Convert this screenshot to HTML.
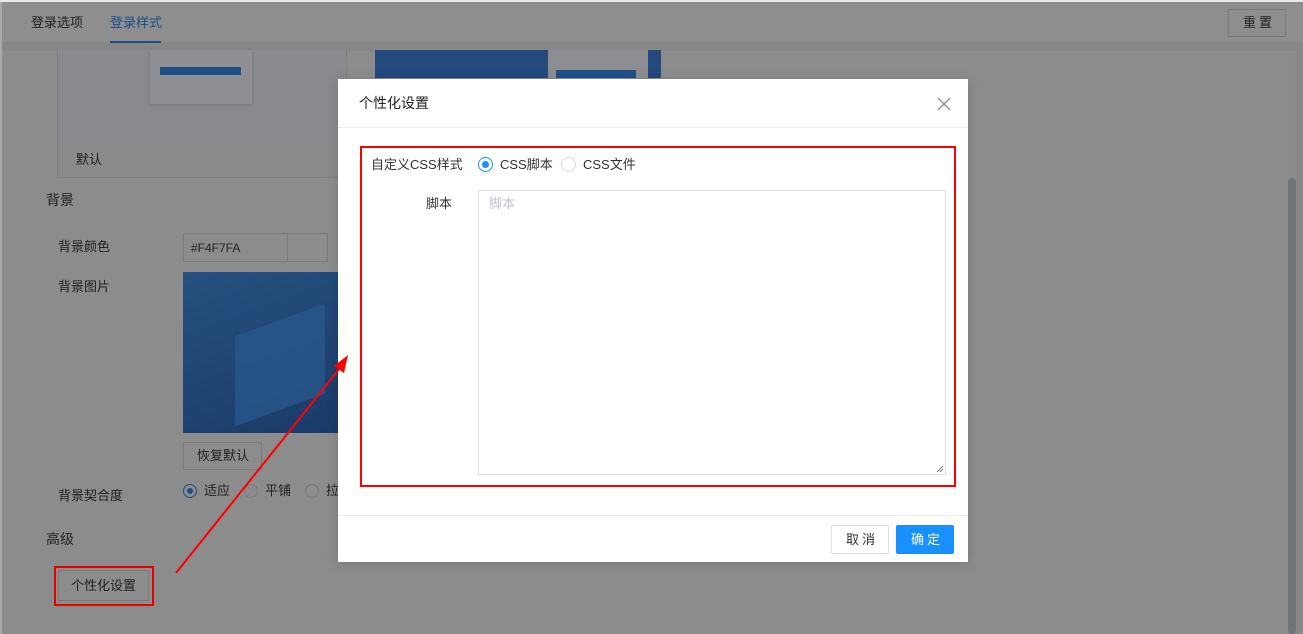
<!DOCTYPE html>
<html><head><meta charset="utf-8"><style>
*{margin:0;padding:0;box-sizing:border-box}
body{width:1303px;height:634px;overflow:hidden;background:#8b8b8b;font-family:"Liberation Sans","Noto Sans CJK SC",sans-serif;font-size:13px;line-height:16px;color:#222;position:relative}
.a{position:absolute}
.t{position:absolute;white-space:nowrap}
</style></head><body>
<div class="a" style="left:0;top:0;width:1303px;height:2px;background:#e8e8ea"></div>
<div class="a" style="left:0;top:2px;width:1303px;height:40px;background:#8e8e8e"></div>
<div class="a" style="left:0;top:42px;width:1303px;height:9px;background:#878787"></div>
<div class="a" style="left:0;top:2px;width:2px;height:632px;background:#a9a9ad"></div>
<div class="t" style="left:31px;top:15px;color:#232323">登录选项</div>
<div class="t" style="left:110px;top:15px;color:#1b4e86">登录样式</div>
<div class="a" style="left:110px;top:41px;width:51px;height:2px;background:#1b4e86"></div>
<div class="a" style="left:1228px;top:9px;width:58px;height:28px;border:1px solid #7a7a7a"></div>
<div class="t" style="left:1243px;top:15px;letter-spacing:3px">重置</div>
<div class="a" style="left:8px;top:51px;width:1281px;height:583px;background:#8c8c8c"></div>
<div class="a" style="left:1288px;top:178px;width:8px;height:456px;background:#707378;border-radius:4px"></div>
<div class="a" style="left:1296px;top:51px;width:7px;height:583px;background:#878787"></div>
<div class="a" style="left:57px;top:50px;width:290px;height:128px;border:1px solid #7f7f7f;border-top:none;background:#8a8a8c"></div>
<div class="a" style="left:58px;top:50px;width:288px;height:92px;background:#888a8e"></div>
<div class="a" style="left:150px;top:50px;width:102px;height:54px;background:#8e8f92;box-shadow:0 1px 4px rgba(0,0,0,.15)"></div>
<div class="a" style="left:160px;top:67px;width:81px;height:8px;background:#1f4f87"></div>
<div class="t" style="left:76px;top:152px;color:#1e1e1e">默认</div>
<div class="a" style="left:375px;top:50px;width:286px;height:28px;background:#24497c"></div>
<div class="a" style="left:548px;top:50px;width:100px;height:28px;background:#8c8e92"></div>
<div class="a" style="left:556px;top:70px;width:80px;height:8px;background:#1f4f87"></div>
<div class="t" style="left:46px;top:192px;font-size:14px">背景</div>
<div class="t" style="left:58px;top:239px">背景颜色</div>
<div class="a" style="left:183px;top:233px;width:145px;height:29px;border:1px solid #7a7a7a"></div>
<div class="a" style="left:287px;top:234px;width:1px;height:27px;background:#7a7a7a"></div>
<div class="t" style="left:191px;top:240px;font-size:12px">#F4F7FA</div>
<div class="t" style="left:58px;top:279px">背景图片</div>
<div class="a" style="left:183px;top:272px;width:155px;height:161px;background:linear-gradient(160deg,#26507f,#1f4473 60%,#1a3a68)"></div>
<div class="a" style="left:235px;top:320px;width:90px;height:90px;background:#2c5e93;opacity:.6;transform:skewY(-20deg)"></div>
<div class="a" style="left:183px;top:442px;width:79px;height:28px;border:1px solid #7a7a7a"></div>
<div class="t" style="left:197px;top:448px">恢复默认</div>
<div class="t" style="left:58px;top:488px">背景契合度</div>
<div class="a" style="left:183px;top:484px;width:14px;height:14px;border-radius:50%;border:1px solid #1b4e86;background:#8c8c8c"></div>
<div class="a" style="left:187px;top:488px;width:6px;height:6px;border-radius:50%;background:#1b4e86"></div>
<div class="t" style="left:204px;top:483px">适应</div>
<div class="a" style="left:244px;top:484px;width:14px;height:14px;border-radius:50%;border:1px solid #7a7a7a"></div>
<div class="t" style="left:265px;top:483px">平铺</div>
<div class="a" style="left:305px;top:484px;width:14px;height:14px;border-radius:50%;border:1px solid #7a7a7a"></div>
<div class="t" style="left:326px;top:483px">拉</div>
<div class="t" style="left:46px;top:531px;font-size:14px">高级</div>
<div class="a" style="left:58px;top:570px;width:91px;height:31px;border:1px solid #7a7a7a"></div>
<div class="t" style="left:71px;top:578px">个性化设置</div>
<div class="a" style="left:54px;top:566px;width:100px;height:40px;border:2px solid #e60000"></div>
<div class="a" style="left:338px;top:79px;width:630px;height:483px;background:#fff;box-shadow:0 2px 12px rgba(0,0,0,.15)"></div>
<div class="t" style="left:359px;top:95px;font-size:14px;color:#222">个性化设置</div>
<svg class="a" style="left:937px;top:97px" width="14" height="14"><path d="M1 1L13 13M13 1L1 13" stroke="#909399" stroke-width="1.4"/></svg>
<div class="a" style="left:338px;top:127px;width:630px;height:1px;background:#ebeef5"></div>
<div class="a" style="left:360px;top:146px;width:596px;height:341px;border:2px solid #f00"></div>
<div class="t" style="left:371px;top:157px;color:#333">自定义CSS样式</div>
<div class="a" style="left:478px;top:157px;width:15px;height:15px;border-radius:50%;border:1px solid #1890ff"></div>
<div class="a" style="left:482px;top:161px;width:7px;height:7px;border-radius:50%;background:#1890ff"></div>
<div class="t" style="left:500px;top:157px;color:#333">CSS脚本</div>
<div class="a" style="left:561px;top:157px;width:15px;height:15px;border-radius:50%;border:1px solid #d9d9d9"></div>
<div class="t" style="left:583px;top:157px;color:#333">CSS文件</div>
<div class="t" style="left:426px;top:196px;color:#333">脚本</div>
<div class="a" style="left:478px;top:190px;width:468px;height:285px;border:1px solid #dcdfe6"></div>
<div class="t" style="left:489px;top:196px;color:#c0c4cc">脚本</div>
<svg class="a" style="left:936px;top:465px" width="8" height="8"><path d="M1 7L7 1M4 7L7 4" stroke="#777" stroke-width="1"/></svg>
<div class="a" style="left:338px;top:515px;width:630px;height:1px;background:#ebeef5"></div>
<div class="a" style="left:831px;top:525px;width:58px;height:29px;border:1px solid #dcdfe6;border-radius:2px"></div>
<div class="t" style="left:846px;top:532px;letter-spacing:3px;color:#333">取消</div>
<div class="a" style="left:896px;top:525px;width:58px;height:29px;background:#1890ff;border-radius:2px"></div>
<div class="t" style="left:911px;top:532px;letter-spacing:3px;color:#fff">确定</div>
<svg class="a" style="left:0;top:0" width="1303" height="634"><line x1="176" y1="573" x2="340" y2="368" stroke="#f00" stroke-width="2"/><path d="M348 355L334 366L344 373Z" fill="#f00"/></svg>
</body></html>
